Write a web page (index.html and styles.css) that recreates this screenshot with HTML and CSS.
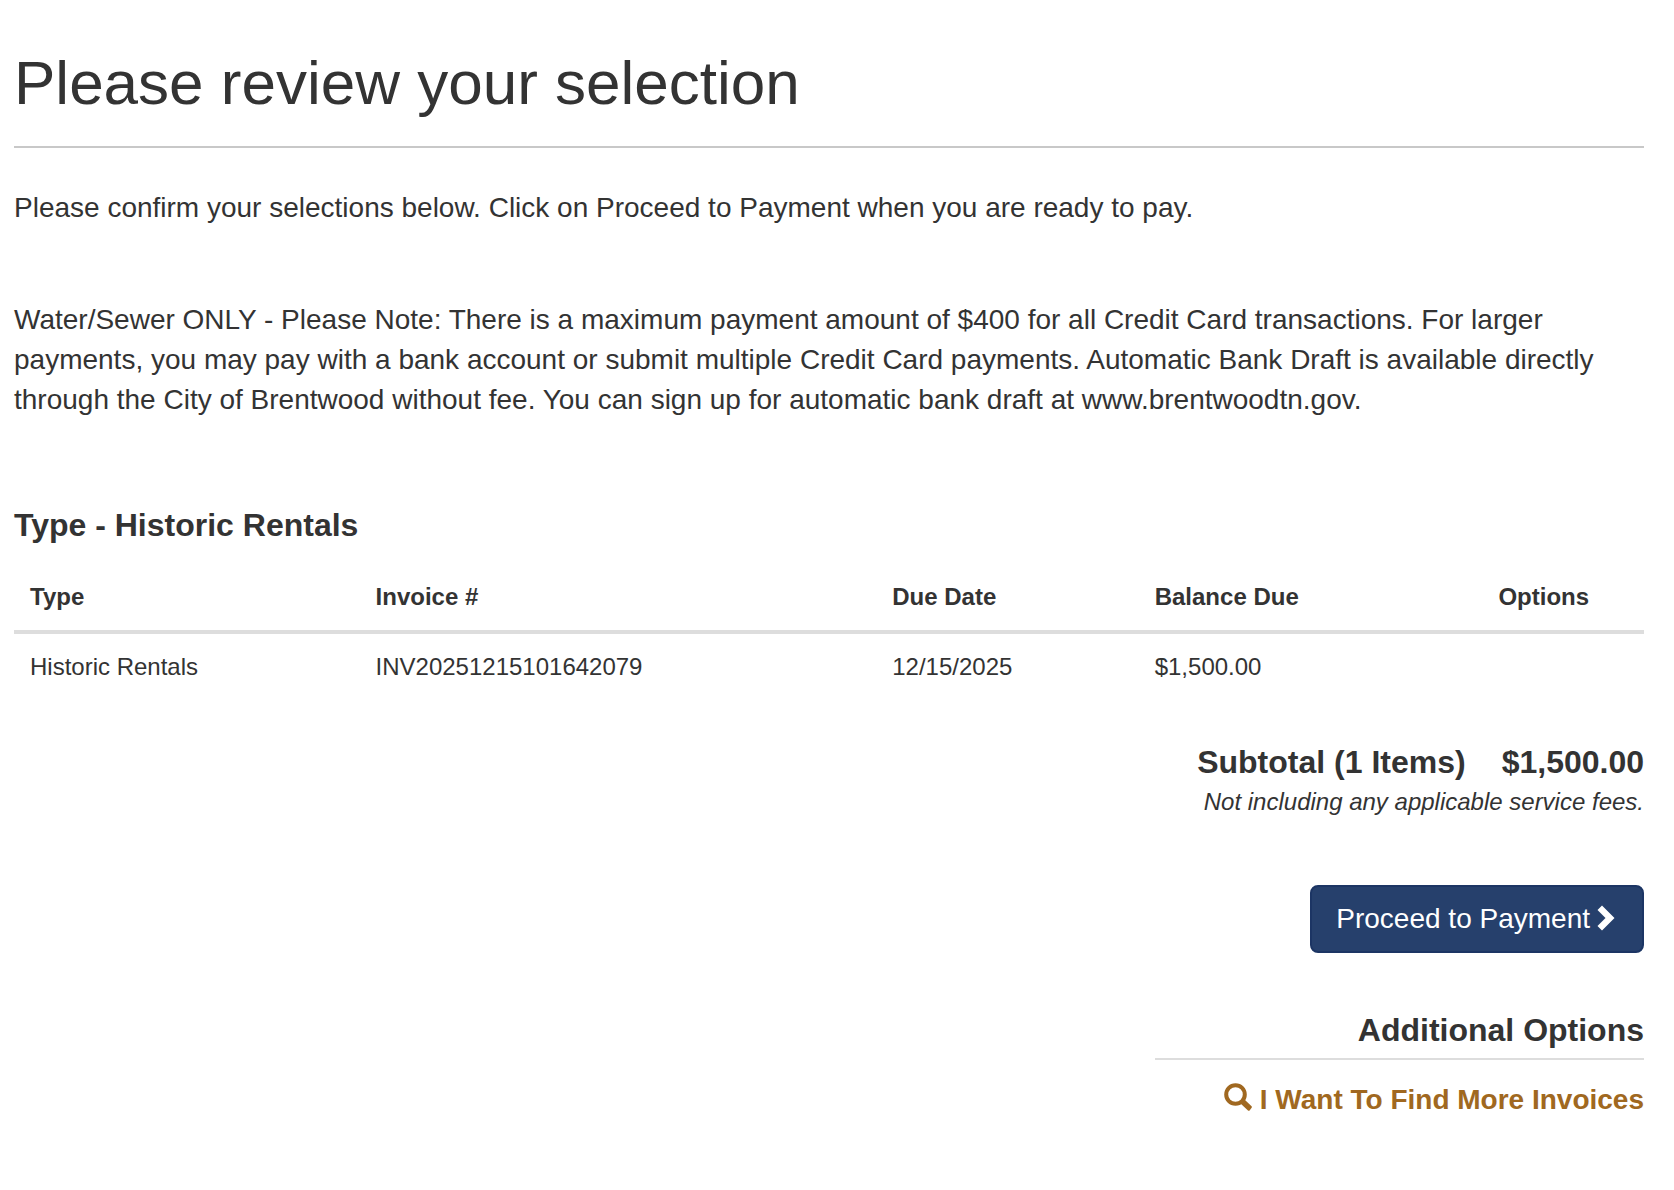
FILE: index.html
```html
<!DOCTYPE html>
<html lang="en">
<head>
<meta charset="utf-8">
<meta name="viewport" content="width=device-width, initial-scale=1">
<title>Please review your selection</title>
<link rel="stylesheet" href="styles.css">
</head>
<body>
<main class="page">
  <h1 class="page-title">Please review your selection</h1>
  <p class="lead">Please confirm your selections below. Click on Proceed to Payment when you are ready to pay.</p>
  <p class="lead notice">Water/Sewer ONLY - Please Note: There is a maximum payment amount of $400 for all Credit Card transactions. For larger payments, you may pay with a bank account or submit multiple Credit Card payments. Automatic Bank Draft is available directly through the City of Brentwood without fee. You can sign up for automatic bank draft at www.brentwoodtn.gov.</p>

  <h2 class="section-title" id="items-title">Type - Historic Rentals</h2>
  <table class="items" aria-labelledby="items-title">
    <colgroup><col class="col-type"><col class="col-invoice"><col class="col-date"><col class="col-balance"><col class="col-options"></colgroup>
    <thead>
      <tr><th scope="col">Type</th><th scope="col">Invoice #</th><th scope="col">Due Date</th><th scope="col">Balance Due</th><th scope="col" class="options">Options</th></tr>
    </thead>
    <tbody>
      <tr><td>Historic Rentals</td><td>INV20251215101642079</td><td>12/15/2025</td><td>$1,500.00</td><td></td></tr>
    </tbody>
  </table>

  <div class="summary">
    <div class="subtotal"><span>Subtotal (1 Items)</span><span>$1,500.00</span></div>
    <p class="fees">Not including any applicable service fees.</p>
    <button type="button" class="proceed">Proceed to Payment<svg class="chevron" viewBox="0 0 18 26" aria-hidden="true"><path d="M5 0.500L17.500 13L5 25.500L0.500 21L8.500 13L0.500 5Z" fill="currentColor"/></svg></button>
    <section class="more">
      <h2 class="more-title">Additional Options</h2>
      <a class="more-link" href="#"><svg class="search" viewBox="0 0 28 28" aria-hidden="true"><circle cx="11.500" cy="11.500" r="9.300" fill="none" stroke="currentColor" stroke-width="4"/><path d="M16.500 20.500L20.500 16.500L27.600 23.200Q28.200 24 27.600 24.800L25.600 27.400Q24.800 28.200 24 27.600Z" fill="currentColor"/></svg>I Want To Find More Invoices</a>
    </section>
  </div>
</main>
</body>
</html>
```
FILE: styles.css
```css
* { box-sizing: border-box; }
body { margin: 0; background: #fff; color: #333; font-family: "Liberation Sans", Arial, sans-serif; font-size: 24px; line-height: 34px; }
h1, h2, p { margin: 0; }
.page { padding: 48px 30px 48px 14px; }
.page-title { font-size: 62px; font-weight: 400; line-height: 70px; padding-bottom: 28px; border-bottom: 2px solid #c8c8c8; margin-bottom: 40px; }
.lead { font-size: 28px; line-height: 40px; }
.notice { margin: 72px 0 87px; }
.section-title { font-size: 32px; line-height: 36px; margin-bottom: 21px; }
.items { width: 100%; border-collapse: collapse; table-layout: fixed; }
.items th, .items td { padding: 16px; text-align: left; }
.items th { border-bottom: 4px solid #ddd; }
.items .options { text-align: center; }
.col-type { width: 21.2%; }
.col-invoice { width: 31.7%; }
.col-date { width: 16.1%; }
.col-balance { width: 18.7%; }
.summary { display: flex; flex-direction: column; align-items: flex-end; margin-top: 42px; }
.subtotal { display: flex; gap: 36px; font-size: 32px; font-weight: 700; line-height: 40px; }
.fees { font-style: italic; line-height: 40px; }
.proceed { display: flex; align-items: center; gap: 7px; margin-top: 63px; padding: 12px 27px 12px 24px; border: 2px solid #1c3564; border-radius: 8px; background: #26406c; color: #fff; font-family: inherit; font-size: 28px; line-height: 40px; cursor: pointer; }
.chevron { width: 18px; height: 26px; margin-bottom: 3px; }
.more { width: 30%; margin-top: 57px; text-align: right; }
.more-title { font-size: 32px; line-height: 40px; padding-bottom: 8px; border-bottom: 2px solid #ddd; margin-bottom: 20px; }
.more-link { display: inline-flex; align-items: center; gap: 8px; color: #a06820; font-size: 28px; font-weight: 700; line-height: 40px; text-decoration: none; white-space: nowrap; }
.search { width: 28px; height: 28px; margin-bottom: 6px; }
```
